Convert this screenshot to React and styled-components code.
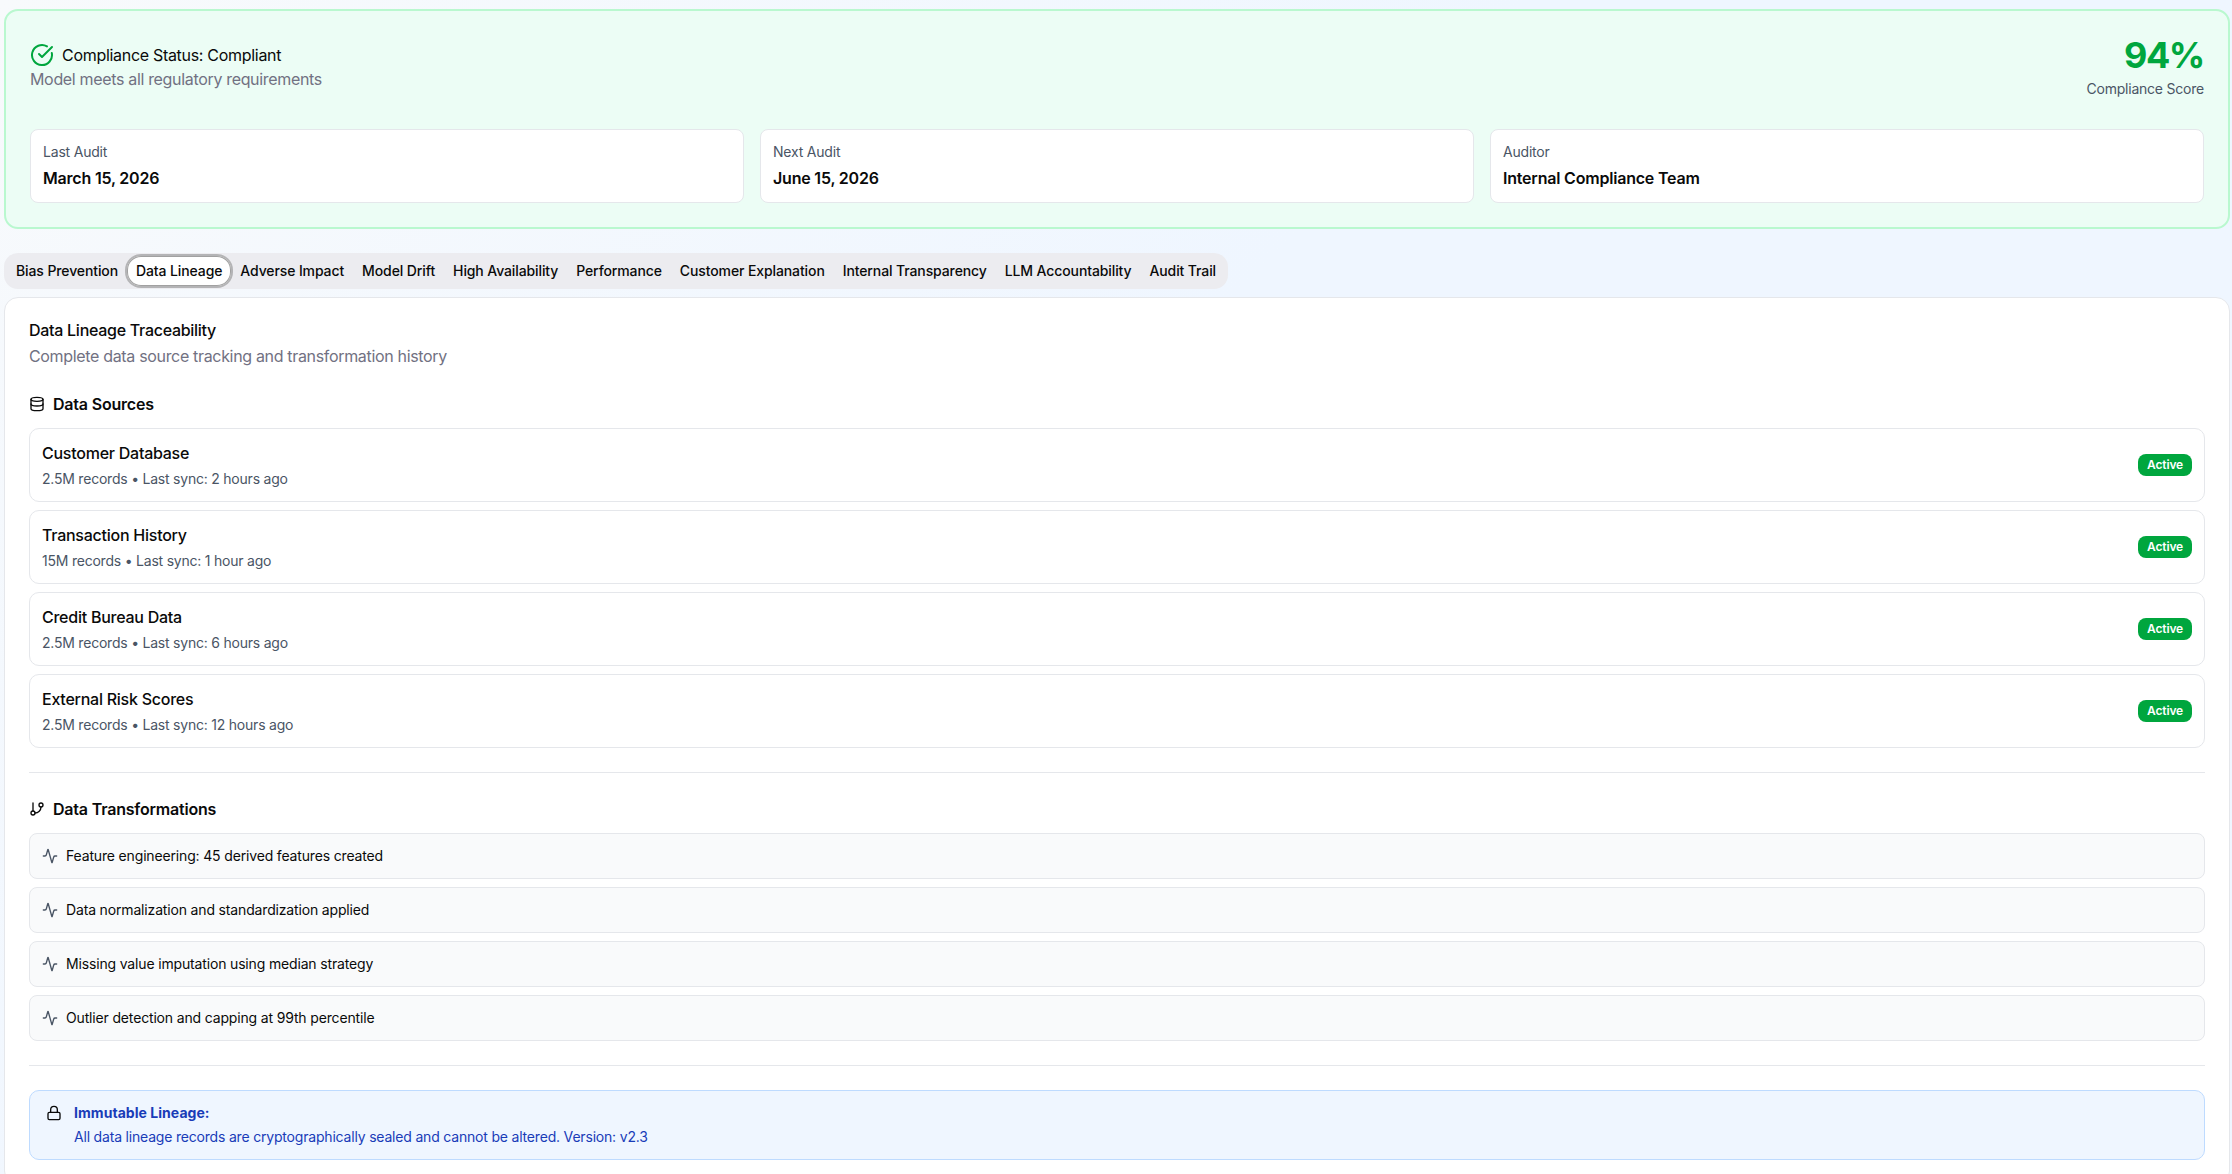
import React from "react";
import styled, { createGlobalStyle } from "styled-components";
import { Activity, CircleCheckBig, Database, GitBranch, Lock } from "lucide-react";

const tabs = [
  "Bias Prevention",
  "Data Lineage",
  "Adverse Impact",
  "Model Drift",
  "High Availability",
  "Performance",
  "Customer Explanation",
  "Internal Transparency",
  "LLM Accountability",
  "Audit Trail",
];

const audits = [
  { label: "Last Audit", value: "March 15, 2026" },
  { label: "Next Audit", value: "June 15, 2026" },
  { label: "Auditor", value: "Internal Compliance Team" },
];

const sources = [
  { name: "Customer Database", meta: "2.5M records • Last sync: 2 hours ago" },
  { name: "Transaction History", meta: "15M records • Last sync: 1 hour ago" },
  { name: "Credit Bureau Data", meta: "2.5M records • Last sync: 6 hours ago" },
  { name: "External Risk Scores", meta: "2.5M records • Last sync: 12 hours ago" },
];

const transformations = [
  "Feature engineering: 45 derived features created",
  "Data normalization and standardization applied",
  "Missing value imputation using median strategy",
  "Outlier detection and capping at 99th percentile",
];

const App = () => {
  return (
    <Page>
      <GlobalStyle />
      <Banner>
        <BannerHeader>
          <StatusBlock>
            <StatusLine>
              <CircleCheckBig size={24} color="#00a63e" />
              <span>Compliance Status: Compliant</span>
            </StatusLine>
            <Muted>Model meets all regulatory requirements</Muted>
          </StatusBlock>
          <ScoreBlock>
            <Score>94%</Score>
            <ScoreLabel>Compliance Score</ScoreLabel>
          </ScoreBlock>
        </BannerHeader>
        <AuditGrid>
          {audits.map((audit) => (
            <AuditBox key={audit.label}>
              <AuditLabel>{audit.label}</AuditLabel>
              <AuditValue>{audit.value}</AuditValue>
            </AuditBox>
          ))}
        </AuditGrid>
      </Banner>

      <TabList>
        {tabs.map((tab) => (
          <Tab key={tab} $active={tab === "Data Lineage"}>
            {tab}
          </Tab>
        ))}
      </TabList>

      <Card>
        <CardTitle>Data Lineage Traceability</CardTitle>
        <Muted>Complete data source tracking and transformation history</Muted>

        <SectionTitle $first>
          <Database size={16} />
          Data Sources
        </SectionTitle>
        <List>
          {sources.map((source) => (
            <SourceRow key={source.name}>
              <div>
                <SourceName>{source.name}</SourceName>
                <SourceMeta>{source.meta}</SourceMeta>
              </div>
              <Badge>Active</Badge>
            </SourceRow>
          ))}
        </List>

        <Separator />

        <SectionTitle>
          <GitBranch size={16} />
          Data Transformations
        </SectionTitle>
        <List>
          {transformations.map((item) => (
            <TransformRow key={item}>
              <Activity size={16} color="#4a5565" />
              {item}
            </TransformRow>
          ))}
        </List>

        <Separator />

        <Alert>
          <Lock size={16} color="#0a0a0a" />
          <div>
            <AlertTitle>Immutable Lineage:</AlertTitle>
            <AlertText>
              All data lineage records are cryptographically sealed and cannot be
              altered. Version: v2.3
            </AlertText>
          </div>
        </Alert>
      </Card>
    </Page>
  );
};

const GlobalStyle = createGlobalStyle`
  html, body {
    margin: 0;
    height: 100%;
    overflow: hidden;
  }
  body {
    font-family: Inter, "Liberation Sans", sans-serif;
    color: #0a0a0a;
    -webkit-font-smoothing: antialiased;
  }
  * {
    box-sizing: border-box;
  }
`;

const Page = styled.div`
  height: 100vh;
  overflow: hidden;
  padding: 9px 2px 0 4px;
  background: linear-gradient(135deg, #f8fafc 0%, #eff6ff 45%, #eff6ff 100%);
`;

const Banner = styled.section`
  background: #ecfdf5;
  border: 2px solid #b9f8cf;
  border-radius: 14px;
  padding: 24px;
`;

const BannerHeader = styled.div`
  display: flex;
  align-items: center;
  justify-content: space-between;
  margin-bottom: 30px;
`;

const StatusBlock = styled.div`
  display: flex;
  flex-direction: column;
`;

const StatusLine = styled.div`
  display: flex;
  align-items: center;
  gap: 8px;
  font-size: 16px;
  line-height: 24px;
  letter-spacing: -0.3px;
`;

const Muted = styled.p`
  margin: 0;
  font-size: 16px;
  line-height: 24px;
  letter-spacing: -0.33px;
  color: #717182;
`;

const ScoreBlock = styled.div`
  display: flex;
  flex-direction: column;
  align-items: flex-end;
  gap: 4px;
`;

const Score = styled.div`
  font-size: 36px;
  line-height: 40px;
  font-weight: 700;
  letter-spacing: -1.4px;
  color: #00a63e;
`;

const ScoreLabel = styled.div`
  font-size: 14px;
  line-height: 20px;
  letter-spacing: -0.22px;
  color: #4a5565;
`;

const AuditGrid = styled.div`
  display: grid;
  grid-template-columns: repeat(3, 1fr);
  gap: 16px;
`;

const AuditBox = styled.div`
  background: #fff;
  border: 1px solid #e5e7eb;
  border-radius: 8px;
  padding: 12px;
`;

const AuditLabel = styled.div`
  font-size: 14px;
  line-height: 20px;
  letter-spacing: -0.2px;
  color: #4a5565;
  margin-bottom: 4px;
`;

const AuditValue = styled.div`
  font-size: 16px;
  line-height: 24px;
  font-weight: 600;
  letter-spacing: -0.2px;
`;

const TabList = styled.div`
  display: inline-flex;
  height: 36px;
  margin-top: 24px;
  padding: 3px;
  vertical-align: top;
  background: #ececf0;
  border-radius: 14px;
`;

const Tab = styled.div`
  display: flex;
  align-items: center;
  height: 30px;
  padding: 0 9px 1px;
  font-size: 14px;
  font-weight: 500;
  letter-spacing: -0.11px;
  white-space: nowrap;
  border-radius: 14px;
  background: ${(props) => (props.$active ? "#fff" : "transparent")};
  box-shadow: ${(props) =>
    props.$active
      ? "inset 0 0 0 1px #a1a1a1, 0 0 0 2px rgba(150,150,150,0.65)"
      : "none"};
`;

const Card = styled.section`
  margin-top: 8px;
  background: #fff;
  border: 1px solid #e5e7eb;
  border-radius: 14px;
  padding: 24px;
`;

const CardTitle = styled.h4`
  margin: 0 0 6px;
  font-size: 16px;
  line-height: 16px;
  font-weight: 500;
  letter-spacing: -0.28px;
`;

const SectionTitle = styled.h3`
  display: flex;
  align-items: center;
  gap: 8px;
  margin: ${(props) => (props.$first ? "24px 0 12px" : "0 0 12px")};
  font-size: 16px;
  line-height: 24px;
  font-weight: 600;
  letter-spacing: -0.2px;
`;

const List = styled.div`
  display: flex;
  flex-direction: column;
  gap: 8px;
`;

const SourceRow = styled.div`
  display: flex;
  align-items: center;
  justify-content: space-between;
  border: 1px solid #e5e7eb;
  border-radius: 10px;
  padding: 12px;
`;

const SourceName = styled.div`
  font-size: 16px;
  line-height: 24px;
  font-weight: 500;
  letter-spacing: -0.25px;
  margin-bottom: 4px;
`;

const SourceMeta = styled.div`
  font-size: 14px;
  line-height: 20px;
  letter-spacing: -0.22px;
  color: #4a5565;
`;

const Badge = styled.span`
  border: 1px solid transparent;
  border-radius: 8px;
  padding: 2px 8px;
  background: #00a63e;
  color: #fff;
  font-size: 12px;
  line-height: 16px;
  font-weight: 600;
  letter-spacing: -0.15px;
`;

const Separator = styled.hr`
  height: 1px;
  margin: 24px 0;
  border: 0;
  background: #e5e7eb;
`;

const TransformRow = styled.div`
  display: flex;
  align-items: center;
  gap: 8px;
  background: #f9fafb;
  border: 1px solid #e5e7eb;
  border-radius: 8px;
  padding: 12px;
  font-size: 14px;
  line-height: 20px;
  letter-spacing: -0.16px;
`;

const Alert = styled.div`
  display: flex;
  align-items: flex-start;
  gap: 12px;
  background: #eff6ff;
  border: 1px solid #bedbff;
  border-radius: 10px;
  padding: 12px 16px;

  svg {
    margin-top: 2px;
    flex-shrink: 0;
  }
`;

const AlertTitle = styled.div`
  font-size: 14px;
  line-height: 20px;
  font-weight: 700;
  letter-spacing: 0.05px;
  color: #193cb8;
  margin-bottom: 4px;
`;

const AlertText = styled.div`
  font-size: 14px;
  line-height: 20px;
  letter-spacing: -0.19px;
  color: #193cb8;
`;

export default App;
